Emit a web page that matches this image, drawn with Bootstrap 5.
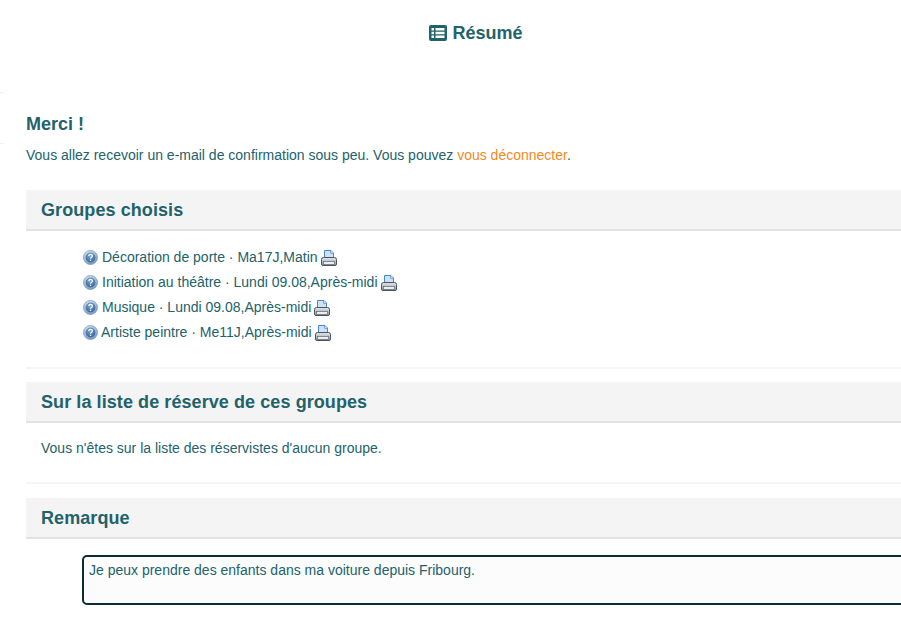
<!DOCTYPE html>
<html lang="fr">
<head>
<meta charset="utf-8">
<title>Résumé</title>
<link href="https://cdn.jsdelivr.net/npm/bootstrap@5.3.0/dist/css/bootstrap.min.css" rel="stylesheet">
<style>
html,body{height:100%;overflow:hidden;background:#fff}
body{font-family:"Liberation Sans",Arial,sans-serif;font-size:14px;line-height:20px;color:#22626a}
.page-wrap{width:899px;margin-left:26px}
.page-title{font-size:18px;line-height:22px;font-weight:700;color:#22626a;margin:0;padding-top:22px;height:114px}
.page-title svg{vertical-align:-2px;margin-left:1px}
.thanks{font-size:18px;line-height:20px;font-weight:700;color:#22626a;margin:0 0 11px}
.intro{margin:0 0 25px}
.intro a{color:#f08a1c;text-decoration:none}
.sec-head{background:#f4f4f4;border-bottom:2px solid #e2e2e2;height:41px;padding:9px 15px 0;font-size:18px;line-height:22px;font-weight:700;letter-spacing:.08px;color:#22626a;margin:0}
.sec-body{border-bottom:2px solid #f5f5f5}
.s1{height:138px;margin-bottom:13px;padding:13px 0 0 57px}
.s2{height:61px;margin-bottom:14px;padding:15px 15px 0}
.row-item{height:25px;display:flex;align-items:center;gap:3px;white-space:nowrap}
.row-item svg{margin-top:2px;flex:none}
.row-item .q{margin-right:1px}
.row-item .q-tight{margin-right:0}
.note-box{margin:16px 0 0 56px;height:50px;border:2px solid #0b2d33;border-radius:5px;background:#fcfcfc;padding:3px 5px}
.side-mark{position:absolute;left:0;top:92px;width:4px;height:52px;border-top:1px solid #f2f2f2;border-bottom:1px solid #f2f2f2}
</style>
</head>
<body>
<svg width="0" height="0" class="position-absolute">
<defs>
<radialGradient id="qg" cx="40%" cy="25%" r="80%"><stop offset="0" stop-color="#dbe6f3"/><stop offset=".6" stop-color="#a3bcd9"/><stop offset="1" stop-color="#6d90ba"/></radialGradient>
<radialGradient id="qh" cx="45%" cy="30%" r="75%"><stop offset="0" stop-color="#7fa6ce"/><stop offset="1" stop-color="#2f6299"/></radialGradient>
<linearGradient id="pg" x1="0" y1="0" x2="0" y2="1"><stop offset="0" stop-color="#e6e9ee"/><stop offset="1" stop-color="#8d96a2"/></linearGradient>
<symbol id="qi" viewBox="0 0 15 15">
<circle cx="7.500" cy="7.500" r="7" fill="url(#qg)" stroke="#7d9cc0" stroke-width=".8"/>
<circle cx="7.500" cy="7.500" r="4.900" fill="url(#qh)"/>
<path d="M5.700 6.100c.1-1.100.8-1.700 1.900-1.700s1.800.7 1.800 1.500c0 1.400-1.800 1.400-1.800 2.800" fill="none" stroke="#fff" stroke-width="1.200"/>
<rect x="6.900" y="9.700" width="1.300" height="1.300" fill="#fff"/>
</symbol>
<symbol id="pi" viewBox="0 0 16 16">
<path d="M3.500.5h6.500l2.500 2.500v6h-9z" fill="#cfe1f6" stroke="#4a88cc"/>
<path d="M9.700.7v2.600h2.700" fill="#eef5fc" stroke="#4a88cc" stroke-width=".8"/>
<path d="M2.500 7.500h11q2 0 2 2v4.500q0 1.500-1.500 1.500H2Q.5 15.500.5 14V9.500q0-2 2-2z" fill="url(#pg)" stroke="#4b545e"/>
<rect x="2.500" y="11.500" width="11" height="3" fill="#eceef1" stroke="#5f6872" stroke-width=".7"/>
</symbol>
<symbol id="li" viewBox="0 0 18 16">
<path fill-rule="evenodd" fill="#22626a" d="M2 0h14a2 2 0 0 1 2 2v12a2 2 0 0 1-2 2H2a2 2 0 0 1-2-2V2a2 2 0 0 1 2-2zM2.500 3v2.500H5V3zM6.500 3v2.500h9V3zM2.500 6.800v2.400H5V6.800zM6.500 6.800v2.400h9V6.800zM2.500 10.500V13H5v-2.500zM6.500 10.500V13h9v-2.500z"/>
</symbol>
</defs>
</svg>
<div class="side-mark"></div>
<div class="page-wrap">
<h1 class="page-title text-center"><svg width="18" height="16"><use href="#li"/></svg> Résumé</h1>
<h2 class="thanks">Merci !</h2>
<p class="intro">Vous allez recevoir un e-mail de confirmation sous peu. Vous pouvez <a href="#">vous déconnecter</a>.</p>

<h3 class="sec-head">Groupes choisis</h3>
<div class="sec-body s1">
<div class="row-item"><svg class="q" width="15" height="15"><use href="#qi"/></svg><span>Décoration de porte · Ma17J,Matin</span><svg width="16" height="16"><use href="#pi"/></svg></div>
<div class="row-item"><svg class="q" width="15" height="15"><use href="#qi"/></svg><span>Initiation au théâtre · Lundi 09.08,Après-midi</span><svg width="16" height="16"><use href="#pi"/></svg></div>
<div class="row-item"><svg class="q" width="15" height="15"><use href="#qi"/></svg><span>Musique · Lundi 09.08,Après-midi</span><svg width="16" height="16"><use href="#pi"/></svg></div>
<div class="row-item"><svg class="q q-tight" width="15" height="15"><use href="#qi"/></svg><span>Artiste peintre · Me11J,Après-midi</span><svg width="16" height="16"><use href="#pi"/></svg></div>
</div>

<h3 class="sec-head">Sur la liste de réserve de ces groupes</h3>
<div class="sec-body s2">Vous n'êtes sur la liste des réservistes d'aucun groupe.</div>

<h3 class="sec-head">Remarque</h3>
<div class="note-box">Je peux prendre des enfants dans ma voiture depuis Fribourg.</div>
</div>
<script src="https://cdn.jsdelivr.net/npm/bootstrap@5.3.0/dist/js/bootstrap.bundle.min.js"></script>
</body>
</html>
